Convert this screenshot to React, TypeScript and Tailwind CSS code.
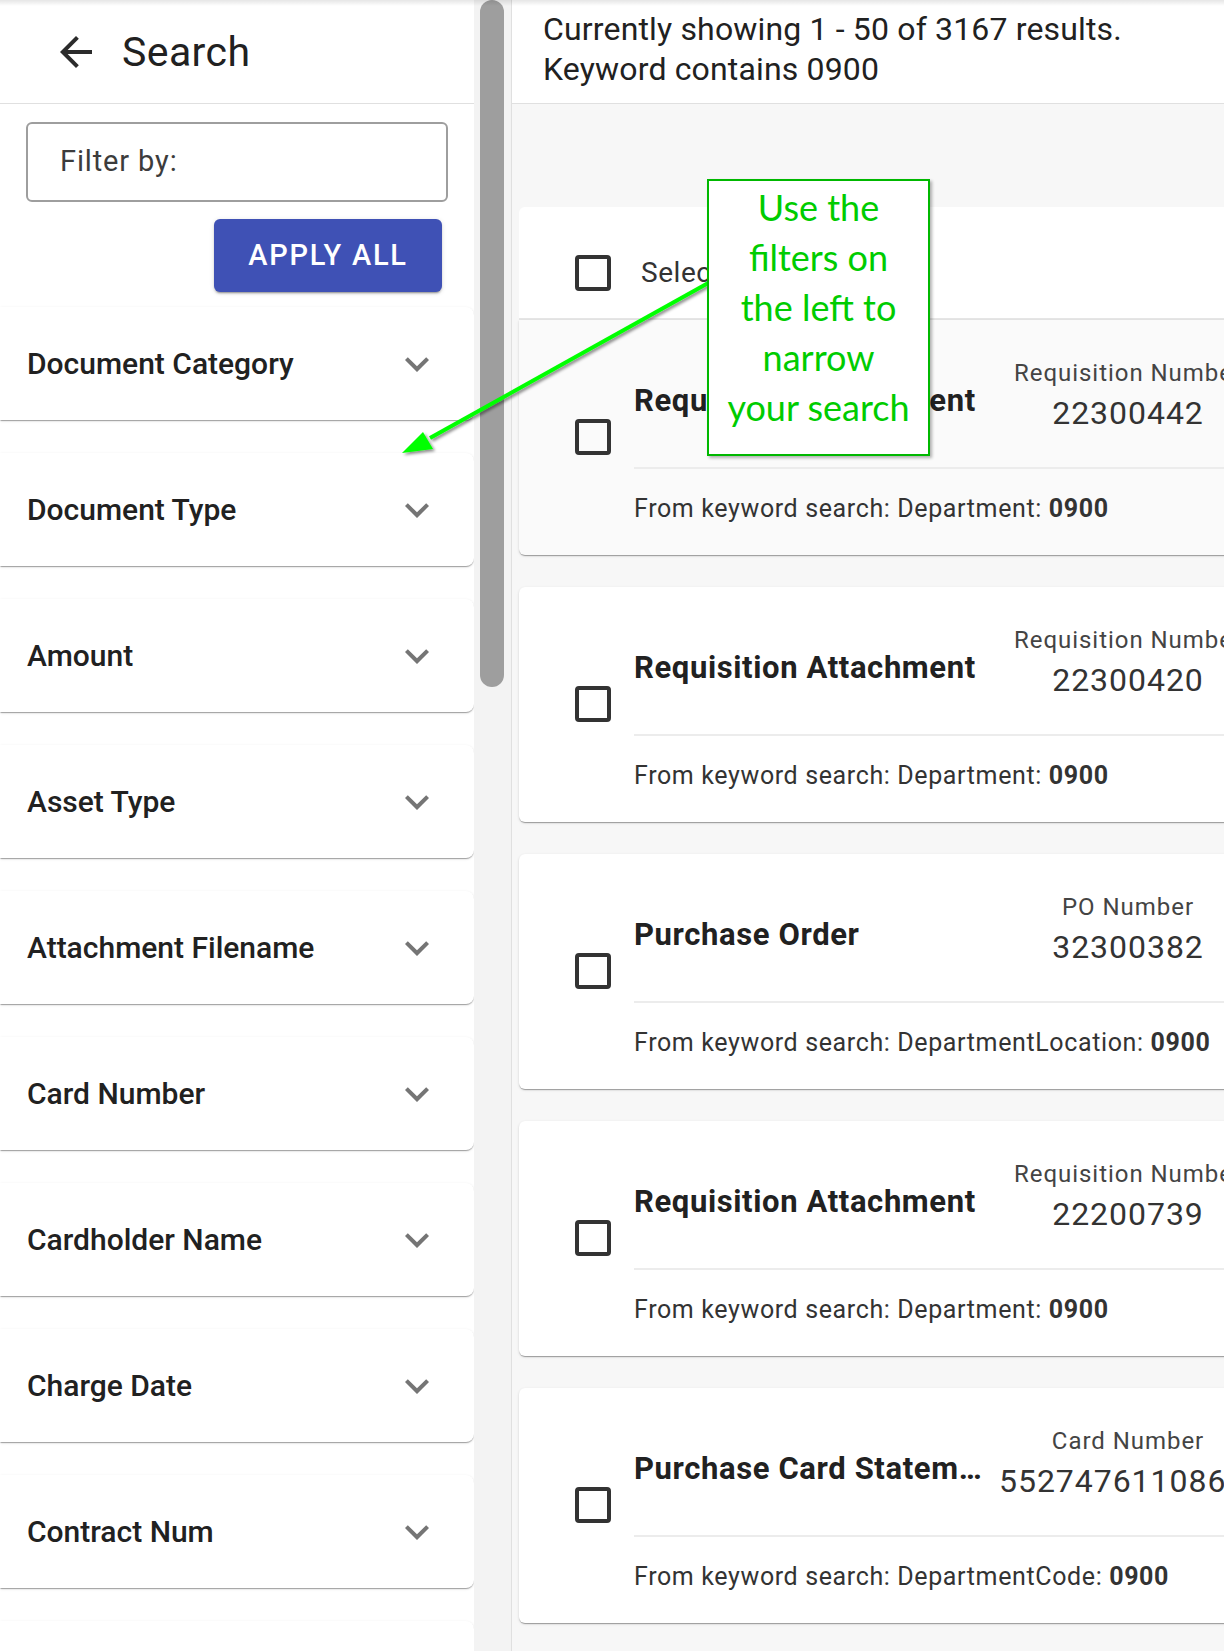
import React from 'react';

const filters = [
  'Document Category',
  'Document Type',
  'Amount',
  'Asset Type',
  'Attachment Filename',
  'Card Number',
  'Cardholder Name',
  'Charge Date',
  'Contract Num',
  'Contract Name',
];

interface Result {
  title: string;
  label: string;
  value: string;
  field: string;
}

const results: Result[] = [
  { title: 'Requisition Attachment', label: 'Requisition Number', value: '22300442', field: 'Department' },
  { title: 'Requisition Attachment', label: 'Requisition Number', value: '22300420', field: 'Department' },
  { title: 'Purchase Order', label: 'PO Number', value: '32300382', field: 'DepartmentLocation' },
  { title: 'Requisition Attachment', label: 'Requisition Number', value: '22200739', field: 'Department' },
  { title: 'Purchase Card Statement', label: 'Card Number', value: '5527476110863914', field: 'DepartmentCode' },
];

function Checkbox() {
  return <div className="w-[36px] h-[36px] border-[4px] border-[#333] rounded-[4px] shrink-0" />;
}

function Chevron() {
  return (
    <svg width="48" height="48" viewBox="0 0 24 24" className="shrink-0">
      <path d="M16.59 8.59 12 13.17 7.41 8.59 6 10l6 6 6-6z" fill="#757575" />
    </svg>
  );
}

function ResultCard({ r, first }: { r: Result; first?: boolean }) {
  return (
    <div
      className={`w-[762px] h-[235px] flex shadow-[0_2px_1px_-1px_rgba(0,0,0,0.2),0_1px_1px_0_rgba(0,0,0,0.14),0_1px_3px_0_rgba(0,0,0,0.12)] ${
        first ? 'bg-[#fafafa] rounded-b-[6px]' : 'bg-white rounded-[6px] mt-[32px]'
      }`}
    >
      <div className="w-[115px] shrink-0 pl-[56px] pt-[99px]">
        <Checkbox />
      </div>
      <div className="flex-1 min-w-0 flex flex-col pr-[24px]">
        <div className="h-[147px] flex">
          <div className="flex-1 min-w-0 pr-4 pt-[62px]">
            <div className="truncate text-[31px] leading-[37px] font-bold tracking-[0.02em] text-[#212121]">{r.title}</div>
          </div>
          <div className="w-[258px] shrink-0 pt-[39px] text-center whitespace-nowrap">
            <div className="text-[24px] leading-[28px] text-[#444] tracking-[0.04em]">{r.label}</div>
            <div className="mt-[7px] text-[32px] leading-[38px] text-[#333] tracking-[0.03em]">{r.value}</div>
          </div>
        </div>
        <div className="h-[2px] bg-[#ececec]" />
        <div className="pt-[25px] text-[25px] leading-[30px] text-[#333] tracking-[0.025em] whitespace-nowrap">
          From keyword search: {r.field}: <span className="font-bold">0900</span>
        </div>
      </div>
    </div>
  );
}

export default function App() {
  return (
    <div className="relative w-[1224px] h-[1651px] overflow-hidden flex bg-white font-['Roboto','Liberation_Sans',sans-serif]">
      {/* Sidebar */}
      <aside className="w-[474px] shrink-0 bg-white flex flex-col">
        <div className="h-[104px] shrink-0 border-b border-[#e0e0e0] flex items-center pl-[52px]">
          <svg width="48" height="48" viewBox="0 0 24 24">
            <path d="M20 11H7.83l5.59-5.59L12 4l-8 8 8 8 1.41-1.41L7.83 13H20v-2z" fill="#2b2b2b" />
          </svg>
          <span className="ml-[22px] text-[41px] leading-[48px] tracking-[0.01em] text-[#212121]">Search</span>
        </div>
        <div className="mt-[18px] mx-[26px] h-[80px] shrink-0 border-2 border-[#9e9e9e] rounded-[6px] flex items-center pl-[32px]">
          <span className="text-[29px] text-[#3c3c3c] tracking-[0.03em]">Filter by:</span>
        </div>
        <button className="mt-[17px] self-end mr-[32px] w-[228px] h-[73px] shrink-0 bg-[#3f51b5] rounded-[6px] text-white text-[29px] font-medium tracking-[0.06em] shadow-[0_3px_1px_-2px_rgba(0,0,0,0.2),0_2px_2px_0_rgba(0,0,0,0.14),0_1px_5px_0_rgba(0,0,0,0.12)]">
          APPLY ALL
        </button>
        <div className="mt-[15px] flex flex-col gap-[33px]">
          {filters.map((f) => (
            <div
              key={f}
              className="h-[113px] shrink-0 bg-white rounded-r-[8px] flex items-center justify-between pl-[27px] pr-[33px] shadow-[0_2px_1px_-1px_rgba(0,0,0,0.2),0_1px_1px_0_rgba(0,0,0,0.14),0_1px_3px_0_rgba(0,0,0,0.12)]"
            >
              <span className="text-[30px] font-medium text-[#212121]">{f}</span>
              <Chevron />
            </div>
          ))}
        </div>
      </aside>

      {/* Scroll track */}
      <div className="w-[37px] shrink-0 bg-[#f3f3f3] pl-[6px]">
        <div className="w-[24px] h-[687px] rounded-full bg-[#9e9e9e]" />
      </div>

      {/* Main */}
      <main className="w-[790px] shrink-0 border-l border-[#e0e0e0] bg-[#f7f7f7] flex flex-col">
        <div className="h-[104px] shrink-0 bg-white border-b border-[#e0e0e0] pl-[31px] pt-[9px] text-[32px] leading-[40px] tracking-[0.005em] text-[#212121] whitespace-nowrap">
          <div>Currently showing 1 - 50 of 3167 results.</div>
          <div>Keyword contains 0900</div>
        </div>
        <div className="pl-[7px] pt-[103px]">
          <div className="w-[762px] h-[113px] bg-white rounded-t-[6px] border-b-2 border-[#e6e6e6] flex items-center pl-[56px] pt-[20px]">
            <Checkbox />
            <span className="ml-[30px] text-[28px] tracking-[0.02em] text-[#333]">Select all</span>
          </div>
          {results.map((r, i) => (
            <ResultCard key={i} r={r} first={i === 0} />
          ))}
        </div>
      </main>

      {/* top shadow */}
      <div className="absolute inset-x-0 top-0 h-[6px] bg-gradient-to-b from-black/10 to-transparent pointer-events-none" />

      {/* Annotation arrow */}
      <svg className="absolute left-0 top-0 z-10 pointer-events-none" width="1224" height="1651">
        <defs>
          <filter id="sh" x="-10%" y="-10%" width="130%" height="130%">
            <feDropShadow dx="2" dy="2" stdDeviation="1.5" floodColor="#000" floodOpacity="0.45" />
          </filter>
        </defs>
        <g filter="url(#sh)">
          <line x1="710" y1="282" x2="430" y2="438" stroke="#00ff00" strokeWidth="4" />
          <polygon points="402,453 433,449 423,432" fill="#00ff00" />
        </g>
      </svg>

      {/* Callout */}
      <div className="absolute left-[707px] top-[179px] z-20 w-[223px] h-[277px] bg-white border-2 border-[#00b800] shadow-[2px_2px_3px_rgba(0,0,0,0.3)] pt-[1px] text-center text-[36px] leading-[50px] text-[#00cc00] font-['Lato','Open_Sans',sans-serif]">
        <div>Use the</div>
        <div>filters on</div>
        <div>the left to</div>
        <div>narrow</div>
        <div className="whitespace-nowrap">your search</div>
      </div>
    </div>
  );
}
